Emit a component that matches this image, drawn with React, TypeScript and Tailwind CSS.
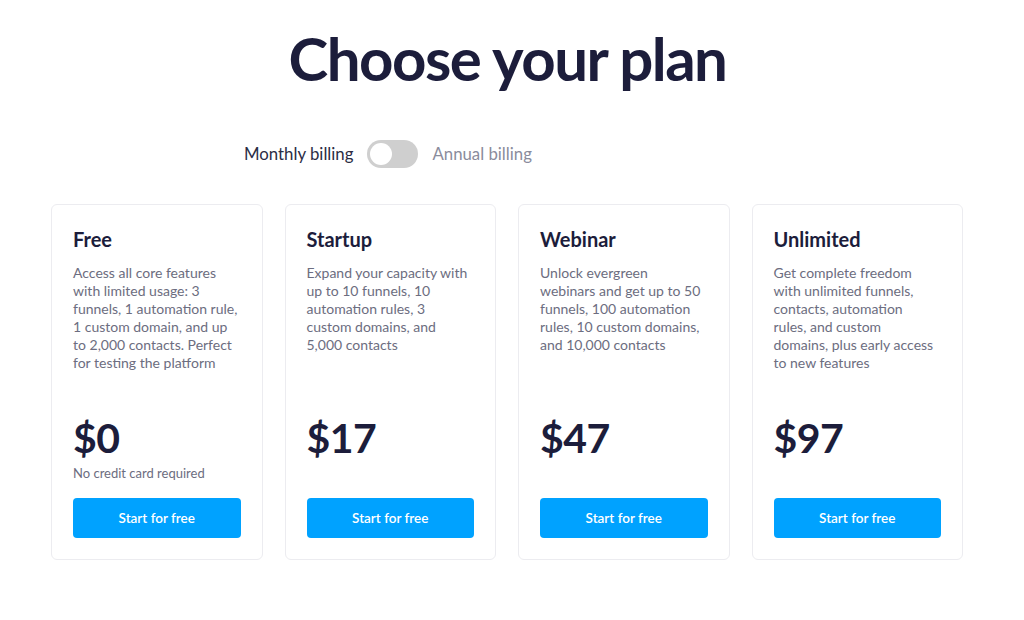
import { useState } from 'react'

const plans = [
    {
        name: 'Free',
        desc: [
            'Access all core features',
            'with limited usage: 3',
            'funnels, 1 automation rule,',
            '1 custom domain, and up',
            'to 2,000 contacts. Perfect',
            'for testing the platform',
        ],
        price: '$0',
        note: 'No credit card required',
    },
    {
        name: 'Startup',
        desc: [
            'Expand your capacity with',
            'up to 10 funnels, 10',
            'automation rules, 3',
            'custom domains, and',
            '5,000 contacts',
        ],
        price: '$17',
    },
    {
        name: 'Webinar',
        desc: [
            'Unlock evergreen',
            'webinars and get up to 50',
            'funnels, 100 automation',
            'rules, 10 custom domains,',
            'and 10,000 contacts',
        ],
        price: '$47',
    },
    {
        name: 'Unlimited',
        desc: [
            'Get complete freedom',
            'with unlimited funnels,',
            'contacts, automation',
            'rules, and custom',
            'domains, plus early access',
            'to new features',
        ],
        price: '$97',
    },
]

export default function App() {
    const [annual, setAnnual] = useState(false)

    return (
        <div className="w-full min-h-[620px] bg-white font-['Lato',sans-serif] text-[#1c1d3b]">
            {/* Title */}
            <h1 className="pt-[20px] pr-[9px] text-center text-[60px] leading-[76px] font-bold tracking-[-1.5px]">
                Choose your plan
            </h1>

            {/* Billing toggle */}
            <div className="mt-[44px] flex items-center h-[28px] pl-[244px] gap-[14px] text-[16.8px]">
                <span className="text-[#2b2d45]">Monthly billing</span>
                <button
                    onClick={() => setAnnual(!annual)}
                    className="w-[51px] h-[28px] rounded-full bg-[#cfcfcf] p-[3px] flex"
                >
                    <span
                        className={
                            annual
                                ? 'w-[22px] h-[22px] rounded-full bg-white ml-auto'
                                : 'w-[22px] h-[22px] rounded-full bg-white'
                        }
                    />
                </button>
                <span className="text-[#8a8c9c]">Annual billing</span>
            </div>

            {/* Cards */}
            <div className="mt-[36px] ml-[51px] w-[912px] grid grid-cols-4 gap-[22px]">
                {plans.map((plan) => (
                    <div
                        key={plan.name}
                        className="h-[356px] rounded-[6px] border border-[#ececf0] px-[21px] pt-[21px] pb-[21px] flex flex-col"
                    >
                        <h2 className="text-[20px] leading-[26px] font-bold">{plan.name}</h2>
                        <p className="mt-[12px] text-[14px] leading-[18px] text-[#6c6d80]">
                            {plan.desc.map((line) => (
                                <span key={line} className="block whitespace-nowrap">
                                    {line}
                                </span>
                            ))}
                        </p>
                        <div className="mt-auto">
                            <div className="text-[41px] leading-[50px] font-bold tracking-[-0.5px]">{plan.price}</div>
                            <div className="h-[22px] text-[13px] leading-[20px] text-[#6c6d80]">{plan.note}</div>
                            <button className="mt-[13px] w-full h-[40px] rounded-[4px] bg-[#00a2ff] text-white text-[13.5px] font-semibold">
                                Start for free
                            </button>
                        </div>
                    </div>
                ))}
            </div>
        </div>
    )
}
